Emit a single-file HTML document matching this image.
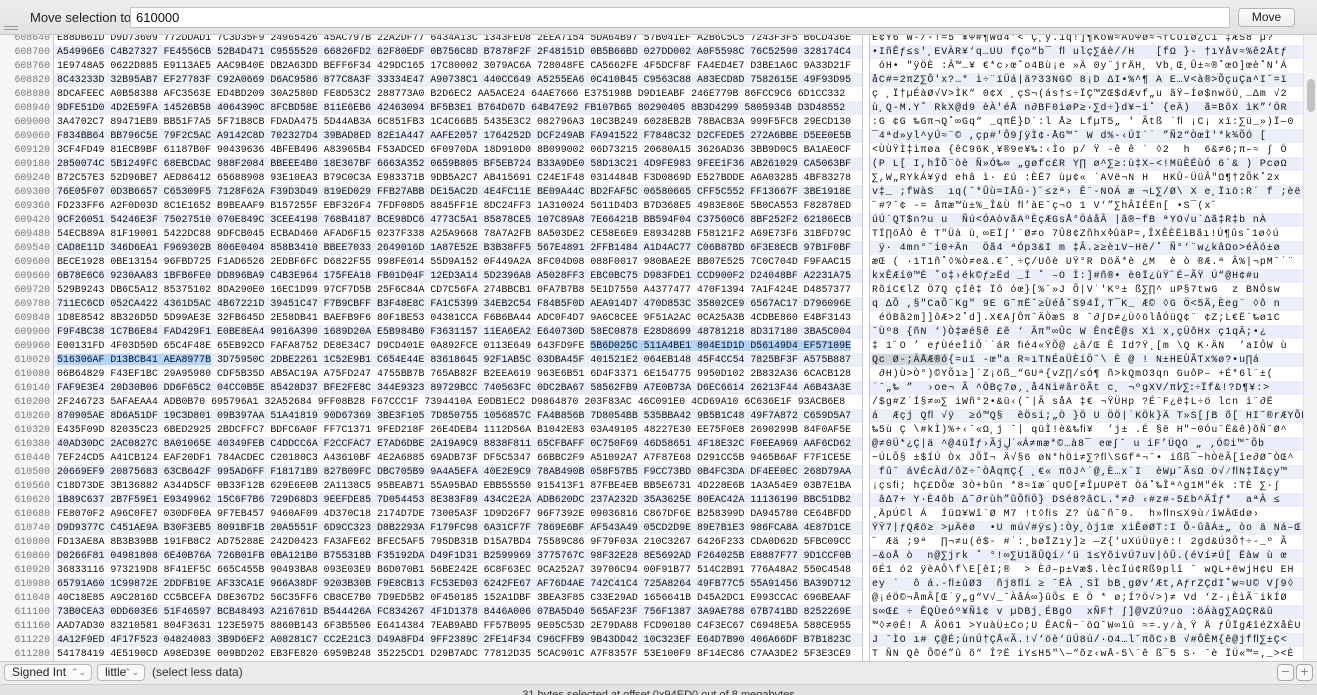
<!DOCTYPE html>
<html><head><meta charset="utf-8"><style>
*{margin:0;padding:0;box-sizing:border-box}
body{width:1317px;height:695px;overflow:hidden;background:#fff;font-family:"Liberation Sans",sans-serif;position:relative}
#top{position:absolute;left:0;top:0;width:1317px;height:35px;background:linear-gradient(#eeeeee,#e2e2e2);border-bottom:1px solid #c8c8c8;z-index:3}
#top .lbl{position:absolute;left:30px;top:10px;font-size:13px;color:#222}
#top .inp{position:absolute;left:130px;top:7px;width:1100px;height:21px;background:#fff;border:1px solid #c4c4c4;font-size:13px;padding:2px 5px;color:#111}
#top .btn{position:absolute;left:1238px;top:8px;width:57px;height:19px;background:linear-gradient(#fbfbfb,#eeeeee);border:1px solid #b4b4b4;border-radius:4px;font-size:12px;text-align:center;line-height:17px;color:#222}
.ham{position:absolute;left:4px;width:14px;height:1px;background:#999}
#rows{position:absolute;left:0;top:31px;width:1303px}
.r{height:14px;line-height:14px;position:relative;font-family:"Liberation Mono",monospace;font-size:9.9px;white-space:pre;color:#111;overflow:hidden}
.r.b{background:#eceefb}
.r .o{position:absolute;left:0;top:0;width:54px;height:14px;background:#f6f6f6;color:#7a7a7a;text-align:right;padding-right:3px;border-right:1px solid #c8c8c8}
.r .h{position:absolute;left:57px;top:0}
.r .t{position:absolute;left:872px;top:0;letter-spacing:1.0px}
.sel{background:#b4d5fd}
.gsel{background:#d3d6dc}
#div{position:absolute;left:862px;top:35px;width:8px;height:626px;background:#fff;border-left:1px solid #c8c8c8;border-right:1px solid #c8c8c8;z-index:2}
#sb{position:absolute;left:1303px;top:35px;width:14px;height:626px;background:#f4f4f4;border-left:1px solid #e0e0e0;z-index:2}
#sb .th{position:absolute;left:3px;top:44px;width:8px;height:33px;background:#c2c2c2;border-radius:4px}
#bot{position:absolute;left:0;top:661px;width:1317px;height:23px;background:#ececec;border-top:1px solid #c8c8c8;z-index:3}
.pop{position:absolute;top:2px;height:17px;background:#fafafa;border:1px solid #b8b8b8;border-radius:4px;font-size:12px;line-height:15px;padding-left:7px;color:#222}
.pop span{position:absolute;right:5px;top:0;font-size:9px;color:#777}
.pm{position:absolute;top:2px;width:17px;height:17px;border:1px solid #aaa;border-radius:4px;background:#f8f8f8;color:#888;font-size:14px;line-height:13px;text-align:center}
#st{position:absolute;left:0;top:684px;width:1317px;height:11px;background:#e2e2e2;border-top:1px solid #cfcfcf;z-index:3;font-size:11px;color:#333;text-align:center;line-height:20px;overflow:hidden}
</style></head><body>
<div id="top">
<div class="lbl">Move selection to</div>
<div class="inp">610000</div>
<div class="btn">Move</div>
</div>
<div class="ham" style="top:26px;z-index:4"></div><div class="ham" style="top:29px;z-index:4"></div>
<div id="rows">
<div class="r"><span class="o">608640</span><span class="h">E88DB61D D9D73609 772DDAD1 7C3D35F9 24965426 45AC797B 22A2DF77 6434A13C 1343FED8 2EEA7154 5DA64B97 57B041EF A2B6C5C5 7243F3F5 B6CD436E</span><span class="t">Ë¢Ÿ6 W-/-!=5 ¥Ψ#¶Wd4'&lt; Ç¸y.1q!]¶KoW≈AÛΨø≈¬fCÛ1ø¿C1 ‡ÆS8 µ?</span></div>
<div class="r b"><span class="o">608700</span><span class="h">A54996E6 C4B27327 FE4556CB 52B4D471 C9555520 66826FD2 62F80EDF 0B756C8D B7878F2F 2F48151D 0B5B66BD 027DD002 A0F5598C 76C52590 328174C4</span><span class="t">•IñÊƒ≤s'¸EVÀR¥‘q…UU fÇo“b¯ ﬂ ulç∑áè//H   [fΩ }- †ıYåv≈%ê2Åtƒ</span></div>
<div class="r"><span class="o">608760</span><span class="h">1E9748A5 0622D885 E9113AE5 AAC9B40E DB2A63DD BEFF6F34 429DC165 17C80002 3079AC6A 728048FE CA5662FE 4F5DCF8F FA4ED4E7 D3BE1A6C 9A33D21F</span><span class="t"> óH• "ÿÖÈ :Â™…¥ €*c›œ˚o4Bù¡e »Ä 0y¨jrÄH¸ Vb¸Œ¸Û±≈®˚œO]œè˚N'Á</span></div>
<div class="r b"><span class="o">608820</span><span class="h">8C43233D 32B95AB7 EF27783F C92A0669 D6AC9586 877C8A3F 33334E47 A90738C1 440CC649 A5255EA6 0C410B45 C9563C88 A83ECD8D 7582615E 49F93D95</span><span class="t">åC#=2πZ∑Ô'x?…* i÷¨ïÜá|ä?33NG© 8¡D ΔI•%^¶ A E…V&lt;à®&gt;ÕçuÇa^Iˇ=ï</span></div>
<div class="r"><span class="o">608880</span><span class="h">8DCAFEEC A0B58388 AFC3563E ED4BD209 30A2580D FE8D53C2 288773A0 B2D6EC2 AA5ACE24 64AE7666 E375198B D9D1EABF 246E779B 86FCC9C6 6D1CC332</span><span class="t">ç ¸Ï†µÉàØ√V&gt;ÌK“ 0¢X ¸çS¬(ás†≤÷ÏÇ™ZŒ$dÆvf„u ãŸ–Íø$nwőÜ¸…Δm √2</span></div>
<div class="r b"><span class="o">608940</span><span class="h">9DFE51D0 4D2E59FA 14526B58 4064390C 8FCBD58E 811E6EB6 42463094 BF5B3E1 B764D67D 64B47E92 FB107B65 80290405 8B3D4299 5805934B D3D48552</span><span class="t">ù¸Q-M.Y˚ RkX@d9 èÀ'éÅ n∂BF0ìøP≥·∑d÷}d¥~í˚ {eÄ)  ã=BôX ìK”‘ÖR</span></div>
<div class="r"><span class="o">609000</span><span class="h">3A4702C7 89471EB9 BB51F7A5 5F71B8CB FDADA475 5D44AB3A 6C851FB3 1C4C66B5 5435E3C2 082796A3 10C3B249 6028EB2B 78BACB3A 999F5FC8 29ECD130</span><span class="t">:G ¢G ‰Gπ¬Q˚∞Gq“ _qπË}D´:l Å≥ LfµT5„ ' Ãtß `ﬂ ¡C¡ xï:∑ü_»)Ï—0</span></div>
<div class="r b"><span class="o">609060</span><span class="h">F834BB64 BB796C5E 79F2C5AC A9142C8D 702327D4 39BAD8ED 82E1A447 AAFE2057 1764252D DCF249AB FA941522 F7848C32 D2CFEDE5 272A6BBE D5EE0E5B</span><span class="t">¯4ªd»yl^yÚ≈¨© ,çp#'Ô9∫ÿÌ¢·ÅG™ˇ W d%-‹ÚI´˙ ”Ñ2“ÒœÌ'*k¾ÕÓ [</span></div>
<div class="r"><span class="o">609120</span><span class="h">3CF4FD49 81ECB9BF 61187B0F 90439636 4BFEB496 A83965B4 F53ADCED 6F0970DA 18D910D0 8B099002 06D73215 20680A15 3626AD36 3BB9D0C5 BA1AE0CF</span><span class="t">&lt;ÙÙŸÌ‡ìπøa {êC96K˛¥®9e¥‰:‹Ìo p/ Ÿ -ê ê ´ ◊2  h  6&amp;≠6;π–≈ ∫ Ö</span></div>
<div class="r b"><span class="o">609180</span><span class="h">2850074C 5B1249FC 68EBCDAC 988F2084 BBEEE4B0 18E367BF 6663A352 0659B805 BF5EB724 B33A9DE0 58D13C21 4D9FE983 9FEE1F36 AB261029 CA5063BF</span><span class="t">(P L[ I,hÎÕ¨òè Ñ»Ó‰∞ „gøfc£R Y∏ ø^∑≥:ù‡X–&lt;!MüÈÉùÓ 6´&amp; ) PcøΩ</span></div>
<div class="r"><span class="o">609240</span><span class="h">B72C57E3 52D96BE7 AED86412 65688908 93E10EA3 B79C0C3A E983371B 9DB5A2C7 AB415691 C24E1F48 0314484B F3D0869D E527BDDE A6A03285 4BF83278</span><span class="t">∑,W„RYkÁ¥ÿd ehâ ì· £ú :ÈË7 ùµ¢« ´AVë¬N H  HKÛ-ÜüÂ"Ω¶†2ÕK˚2x</span></div>
<div class="r b"><span class="o">609300</span><span class="h">76E05F07 0D3B6657 C65309F5 7128F62A F39D3D49 819ED029 FFB27ABB DE15AC2D 4E4FC11E BE09A44C BD2FAF5C 06580665 CFF5C552 FF13667F 3BE1918E</span><span class="t">v‡_ ;fWàS  ıq(ˆ*Ûù=IÅû-)˝≤zª› Ê¨-NOÁ æ ¬L∑/Ø\ X e¸Ïıö:R´ f ;èë</span></div>
<div class="r"><span class="o">609360</span><span class="h">FD233FF6 A2F0D03D 8C1E1652 B9BEAAF9 B157255F EBF326F4 7FDF08D5 8845FF1E 8DC24FF3 1A310024 5611D4D3 B7D368E5 4983E86E 5B0CA553 F82878ED</span><span class="t">˝#?ˆ¢ -= åπæ™ù±%_Î&amp;Ù ﬂ’àEˇç¬O 1 V‘”∑hÂIÉËn[ •S¯(x˝</span></div>
<div class="r b"><span class="o">609420</span><span class="h">9CF26051 54246E3F 75027510 070E849C 3CEE4198 768B4187 BCE98DC6 4773C5A1 85878CE5 107C89A8 7E66421B BB594F04 C37560C6 8BF252F2 62186ECB</span><span class="t">úÚ`QT$n?u u  Ñú&lt;ÓAòvãAºÈçÆGsÅ°ÖáåÂ |â®~fB ªYO√u`Δã‡R‡b nÀ</span></div>
<div class="r"><span class="o">609480</span><span class="h">54ECB89A 81F19001 5422DC88 9DFCB045 ECBAD460 AFAD6F15 0237F338 A25A9668 78A7A2FB 8A503DE2 CE58E6E9 E893428B F58121F2 A69E73F6 31BFD79C</span><span class="t">TÏ∏öÅÒ ê T"Üà ù¸∞EÏ∫‘`Ø≠o 7Û8¢ZñhxߢûäP=‚ÎXÊÈËìBãı!Ú¶ûsˆ1ø◊ú</span></div>
<div class="r b"><span class="o">609540</span><span class="h">CAD8E11D 346D6EA1 F969302B 806E0404 858B3410 BBEE7033 2649016D 1A87E52E B3B38FF5 567E4891 2FFB1484 A1D4AC77 C06B87BD 6F3E8ECB 97B1F0BF</span><span class="t"> ÿ· 4mn°˘i0+Än  Öã4 ªÓp3&amp;I m ‡Â.≥≥èıV~Hë/˚ Ñ°‘¨w¿kâΩo&gt;éÀó±ø</span></div>
<div class="r"><span class="o">609600</span><span class="h">BECE1928 0BE13154 96FBD725 F1AD6526 2EDBF6FC D6822F55 998FE014 55D9A152 0F449A2A 8FC04D08 088F0017 980BAE2E BB07E525 7C0C704D F9FAAC15</span><span class="t">æŒ ( ·1T1ñ˚◊%Ò≠e&amp;.€ˆ¸÷Ç/Uôè UŸ°R DöÄ*è ¿M  è ò ®Æ.ª Â%|¬pM˘˙¨</span></div>
<div class="r b"><span class="o">609660</span><span class="h">6B78E6C6 9230AA83 1BFB6FE0 DD896BA9 C4B3E964 175FEA18 FB01D04F 12ED3A14 5D2396A8 A5028FF3 EBC0BC75 D983FDE1 CCD900F2 D24048BF A2231A75</span><span class="t">kxÊÆí0™É ˚o‡›ék©ƒ≥Ëd _Í ˚ –O Ì:]#ñ®• è0Ï¿ùŸ˝É–ÃŸ Ú“@H¢#u</span></div>
<div class="r"><span class="o">609720</span><span class="h">529B9243 DB6C5A12 85375102 8DA290E0 16EC1D99 97CF7D5B 25F6C84A CD7C56FA 274BBCB1 0FA7B7B8 5E1D7550 A4377477 470F1394 7A1F424E D4857377</span><span class="t">RõíC€lZ Ö7Q çÍê‡ Ïô óœ}[%ˆ»J Õ|V˙'Kº± ß∑∏^ uP§7twG  z BNÔsw</span></div>
<div class="r b"><span class="o">609780</span><span class="h">711EC6CD 052CA422 4361D5AC 4B67221D 39451C47 F7B9CBFF B3F48E8C FA1C5399 34EB2C54 F84B5F0D AEA914D7 470D853C 35802CE9 6567AC17 D796096E</span><span class="t">q ∆Õ ,§"CaÕ¨Kg" 9E G˜πËˇ≥ÙéåˇS94Î,T¯K_ Æ© ◊G Ö&lt;5Ä,Èeg¨ ◊ô n</span></div>
<div class="r"><span class="o">609840</span><span class="h">1D8E8542 8B326D5D 5D99AE3E 32FB645D 2E58DB41 BAEFB9F6 80F1BE53 04381CCA F6B6BA44 ADC0F4D7 9A6C8CEE 9F51A2AC 0CA25A3B 4CDBE860 E4BF3143</span><span class="t"> éÖBã2m]]ôÆ&gt;2˚d].X€A∫ÔπˆÄÒæS 8 ˆ∂∫D≠¿Ù◊ölåÓüQ¢¨ ¢Z;L€Ë`‰ø1C</span></div>
<div class="r b"><span class="o">609900</span><span class="h">F9F4BC38 1C7B6E84 FAD429F1 E0BE8EA4 9016A390 1689D20A E5B984B0 F3631157 11EA6EA2 E640730D 58EC0878 E28D8699 48781218 8D317180 3BA5C004</span><span class="t">˘Ùº8 {ñN ‘)Ò‡æé§ê £ê ‘ Âπ"∞Ûc W Ên¢Ê@s Xì x‚çÜôHx ç1qÄ;•¿ </span></div>
<div class="r"><span class="o">609960</span><span class="h">E00131FD 4F03D50D 65C4F48E 65EB92CD FAFA8752 DE8E34C7 D9CD401E 0A892FCE 0113E649 643FD9FE <span class="sel">5B6D025C 511A4BE1 804E1D1D D56149D4 EF57109E</span></span><span class="t">‡ 1˝O ’ eƒÙéeÎíÕ˙˙áR ﬁé4«ŸÕ@ ¿â/Œ Ê Id?Ÿ˛[m \Q K·ÄN  ’aIÔW ù</span></div>
<div class="r b"><span class="o">610020</span><span class="h"><span class="sel">516306AF D13BCB41 AEA8977B</span> 3D75950C 2DBE2261 1C52E9B1 C654E44E 83618645 92F1AB5C 03DBA45F 401521E2 064EB148 45F4CC54 7825BF3F A575B887</span><span class="t"><span class="gsel">Qc Ø-;ÀÅÆ®ó</span>{=uï -œ"a R≈ıTNÉaÜÈíÖ˘\ È @ ! N±HEÙÃTx%ø?•u∏á</span></div>
<div class="r"><span class="o">610080</span><span class="h">06B64829 F43EF1BC 29A95980 CDF5B35D AB5AC19A A75FD247 4755BB7B 765AB82F B2EEA619 963E6B51 6D4F3371 6E154775 9950D102 2B832A36 6CACB128</span><span class="t"> ∂H)Ù&gt;Ò°)©YÕı≥]´Z¡öß_“GUª{vZ∏/≤Ó¶ ñ&gt;kQmO3qn GuôP– +É*6l¨±(</span></div>
<div class="r b"><span class="o">610140</span><span class="h">FAF9E3E4 20D30B06 DD6F65C2 04CC0B5E 85428D37 BFE2FE8C 344E9323 89729BCC 740563FC 0DC2BA67 58562FB9 A7E0B73A D6EC6614 26213F44 A6B43A3E</span><span class="t">˙˘„‰ ”  ›oe¬ Ã ^ÖBç7ø‚˛å4Nì#âröÃt c¸ ¬ºgXV/π߇∑:÷Ïf&amp;!?D¶¥:&gt;</span></div>
<div class="r"><span class="o">610200</span><span class="h">2F246723 5AFAEAA4 ADB0B70 695796A1 32A52684 9FF08B28 F67CCC1F 7394410A E0DB1EC2 D9864870 203F83AC 46C091E0 4CD69A10 6C636E1F 93ACB6E8</span><span class="t">/$g#Z˙Í§≠∞∑ iWñ°2•&amp;ü‹(ˆ|Ã såA ‡€ ¬ŸÜHp ?É¨F¿ë‡L÷ö lcn ì¨∂Ë</span></div>
<div class="r b"><span class="o">610260</span><span class="h">870905AE 8D6A51DF 19C3D801 09B397AA 51A41819 90D67369 3BE3F105 7D850755 1056857C FA4B856B 7D8054BB 535BBA42 9B5B1C48 49F7A872 C659D5A7</span><span class="t">á  Æçj Qﬂ √ÿ  ≥ó™Q§  êÖsi;„Ò }Ö U ÖÖ|˙KÖk}Ä T»S[∫B õ[ HI˜®rÆYÕß</span></div>
<div class="r"><span class="o">610320</span><span class="h">E435F09D 82035C23 6BED2925 2BDCFFC7 BDFC6A0F FF7C1371 9FED218F 26E4DEB4 1112D56A B1042E83 03A49105 48227E30 EE75F0E8 2690299B 84F0AF5E</span><span class="t">‰5ù Ç \#kÌ)%+‹ˇ«Ω¸j ˇ| qüÌ!è&amp;‰ﬁ¥  ’j± .É §ë H"~0Óu˘Ë&amp;ê)õÑ˘Ø^</span></div>
<div class="r b"><span class="o">610380</span><span class="h">40AD30DC 2AC0827C 8A01065E 40349FEB C4DDCC6A F2CCFAC7 E7AD6DBE 2A19A9C9 8838F811 65CFBAFF 0C750F69 46D58651 4F18E32C F0EEA969 AAF6CD62</span><span class="t">@≠0Ü*¿Ç|ä ^@4üÎƒ›Ãjڸ˙«Á≠mæ*©…à8¯ eœ∫ˇ u iF’ÜQO „ ‚Ó©i™ˆÕb</span></div>
<div class="r"><span class="o">610440</span><span class="h">7EF24CD5 A41CB124 EAF20DF1 784ACDEC C20180C3 A43610BF 4E2A6885 69ADB73F DF5C5347 66BBC2F9 A51092A7 A7F87E68 D291CC5B 9465B6AF F7F1CE5E</span><span class="t">~ÚLÕ§ ±$ÍÚ Òx JÕÏ¬ Ä√§6 øN*hÖi≠∑?ﬂ\SGfª¬˘• íßß¯~hÒëÃ[îe∂Ø˜ÒŒ^</span></div>
<div class="r b"><span class="o">610500</span><span class="h">20669EF9 20875683 63CB642F 995AD6FF F18171B9 827B09FC DBC705B9 9A4A5EFA 40E2E9C9 78AB490B 058F57B5 F9CC73BD 0B4FC3DA DF4EE0EC 268D79AA</span><span class="t"> fû˘ áVÉcÀd/ôZ÷ˇÒÅqπÇ{ ¸€« πöJ^˙@‚È…x´I  èWµ˘ÃsΩ O√⁄ﬂN‡Ï&amp;çy™</span></div>
<div class="r"><span class="o">610560</span><span class="h">C18D73DE 3B136882 A344D5CF 0B33F12B 629E6E0B 2A1138C5 95BEAB71 55A95BAD EBB55550 915413F1 87FBE4EB BB5E6731 4D228E6B 1A3A54E9 03B7E1BA</span><span class="t">¡çsﬁ; hÇ£DÕœ 3Ò+bûn *8≈ïæ´qU©[≠ÎµUPëT Òá˚‰Îª^g1M"ék :TÈ ∑·∫</span></div>
<div class="r b"><span class="o">610620</span><span class="h">1B89C637 2B7F59E1 E9349962 15C6F7B6 729D68D3 9EEFDE85 7D054453 8E383F89 434C2E2A ADB620DC 237A232D 35A3625E 80EAC42A 11136190 BBC51DB2</span><span class="t"> â∆7+ Y·È4ôb Δ˜∂rùh”ûÔﬁÖ} DSé8?âCL.*≠∂ ‹#z#-5£b^ÄÍƒ*  aªÂ ≤</span></div>
<div class="r"><span class="o">610680</span><span class="h">FE8070F2 A96C0FE7 030DF0EA 9F7EB457 9460AF09 4D370C18 2174D7DE 73005A3F 1D9D26F7 96F7392E 09036816 C867DF6E B258399D DA945780 CE64BFDD</span><span class="t">˛ÄpÚ©l Á  ÍüΩ¥Wî`Ø M7 !t◊ﬁs Z? ù&amp;˜ñ˜9.  h»ﬂn≤X9ù⁄îWÄŒdø›</span></div>
<div class="r b"><span class="o">610740</span><span class="h">D9D9377C C451AE9A B30F3EB5 8091BF1B 20A5551F 6D9CC323 D8B2293A F179FC98 6A31CF7F 7869E6BF AF543A49 05CD2D9E 89E7B1E3 986FCA8A 4E87D1CE</span><span class="t">ŸŸ7|ƒQÆö≥ &gt;µÄëø  •U mú√#ÿ≤):Òy¸òj1œ xiÊøØT:I Õ-ûâÁ±„ òo ä Ná–Œ</span></div>
<div class="r"><span class="o">610800</span><span class="h">FD13AE8A 8B3B39BB 191FB8C2 AD75288E 242D0423 FA3AFE62 BFEC5AF5 795DB31B D15A7BD4 75589C86 9F79F03A 210C3267 6426F233 CDA0D62D 5FBC09CC</span><span class="t">˝ Æä ;9ª  ∏¬≠u(é$- #˙:˛bøÏZıy]≥ —Z{‘uXúÜüyë:! 2gd&amp;Ú3Õ†÷-_º Ã</span></div>
<div class="r b"><span class="o">610860</span><span class="h">D0266F81 04981808 6E40B76A 726B01FB 0BA121B0 B755318B F35192DA D49F1D31 B2599969 3775767C 98F32E28 8E5692AD F264025B E8887F77 9D1CCF0B</span><span class="t">–&amp;oÅ ò  n@∑jrk ˚ °!∞∑U1ãÛQí⁄‘ü 1≤YôivÚ7uv|òÛ.(éVí≠Ú[ Ëàw ù œ</span></div>
<div class="r"><span class="o">610920</span><span class="h">36833116 973219D8 8F41EF5C 665C455B 90493BA8 093E03E9 B6D070B1 56BE242E 6C8F63EC 9CA252A7 39706C94 00F91B77 514C2B91 776A48A2 550C4548</span><span class="t">6É1 ó2 ÿèAÔ\f\E[êI;®  &gt; È∂–p±Væ$.lècÏú¢Rß9plî ˘ wQL+ëwjH¢U EH</span></div>
<div class="r b"><span class="o">610980</span><span class="h">65791A60 1C99872E 2DDFB19E AF33CA1E 966A38DF 9203B30B F9E8CB13 FC53ED03 6242FE67 AF76D4AE 742C41C4 725A8264 49FB77C5 55A91456 BA39D712</span><span class="t">ey `  ô á.-ﬂ±ûØ3  ñj8ﬂí ≥ ˘ËÀ ¸SÌ bB˛gØv‘Æt,AƒrZÇdI˚w≈U© V∫9◊ </span></div>
<div class="r"><span class="o">611040</span><span class="h">40C18E85 A9C2816D CC5BCEFA D8E367D2 56C35FF6 CB8CE7B0 7D9ED5B2 0F450185 152A1DBF 3BEA3F85 C33E29AD 1656641B D45A2DC1 E993CCAC 696BEAAF</span><span class="t">@¡éÖ©¬ÅmÃ[Œ˙ÿ„g“V√_ˆÀåÁ∞}ûÕ≤ E Ö * ø;Í?Ö√&gt;)≠ Vd ‘Z-¡ÈìÃ¨ikÍØ</span></div>
<div class="r b"><span class="o">611100</span><span class="h">73B0CEA3 0DD603E6 51F46597 BCB48493 A216761D B544426A FC834267 4F1D1378 8446A006 07BA5D40 565AF23F 756F1387 3A9AE788 67B741BD 8252269E</span><span class="t">s∞Œ£ ÷ ÊQÙeóº¥Ñì¢ v µDBj¸ÉBgO  xÑF† ∫]@VZÚ?uo :öÁàg∑AΩÇR&amp;û</span></div>
<div class="r"><span class="o">611160</span><span class="h">AAD7AD30 83210581 804F3631 123E5975 8860B143 6F3B5506 E6414384 7EAB9ABD FF57B095 9E05C53D 2E79DA88 FCD90180 C4F3EC67 C6948E5A 588CE955</span><span class="t">™◊≠0É! Å ÄO61 &gt;YuàÜ±Co;U ÊACÑ~´öΩˇW∞ïû ≈=.y⁄à¸Ÿ Ä ƒÛÏgÆîéZXåÈU</span></div>
<div class="r b"><span class="o">611220</span><span class="h">4A12F9ED 4F17F523 04824083 3B9D6EF2 A08281C7 CC2E21C3 D49A8FD4 9FF2389C 2FE14F34 C96CFFB9 9B43DD42 10C323EF E64D7B90 406A66DF B7B1823C</span><span class="t">J ˘ÌO ı# Ç@É;ùnÚ†ÇÅ«Ã.!√‘öè‘üÚ8ú/·O4…lˇπõC›B √#ÔÊM{ê@jfﬂ∑±Ç&lt;</span></div>
<div class="r"><span class="o">611280</span><span class="h">54178419 4E5190CD A98ED39E 009BD202 EB3FE820 6959B248 35225CD1 D29B7ADC 77812D35 5CAC901C A7F8357F 53E100F9 8F14EC86 C7AA3DE2 5F3E3CE9</span><span class="t">T ÑN Qê Õ©é”û õ“ Î?Ë iY≤H5"\—“õz‹wÅ-5\¨ê ß¯5 S· ˘è ÏÜ«™=‚_&gt;&lt;È</span></div>
</div>
<div id="div"></div>
<div id="sb"><div class="th"></div></div>
<div id="bot">
<div class="pop" style="left:4px;width:88px">Signed Int<span>⌃⌄</span></div>
<div class="pop" style="left:97px;width:48px">little<span>⌃⌄</span></div>
<div style="position:absolute;left:152px;top:3px;font-size:12px;color:#333">(select less data)</div>
<div class="pm" style="left:1277px">−</div>
<div class="pm" style="left:1296px">+</div>
</div>
<div id="st">31 bytes selected at offset 0x94ED0 out of 8 megabytes</div>
</body></html>
